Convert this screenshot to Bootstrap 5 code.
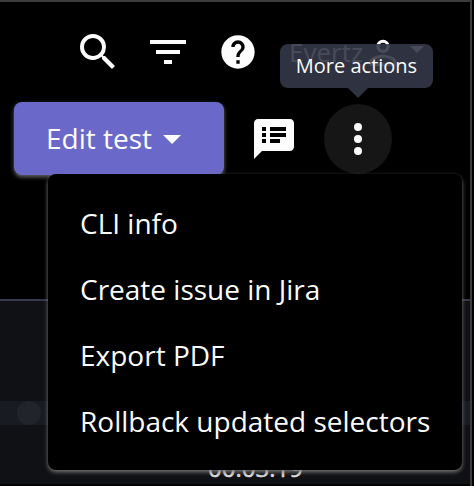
<!DOCTYPE html>
<html lang="en">
<head>
<meta charset="utf-8">
<meta name="viewport" content="width=device-width, initial-scale=1">
<title>Test actions</title>
<link href="https://cdn.jsdelivr.net/npm/bootstrap@5.3.0/dist/css/bootstrap.min.css" rel="stylesheet">
<style>
body{font-family:"Open Sans","Noto Sans",sans-serif;background:#000;color:#fcfcfc;width:474px;height:486px;font-size:28px}
svg{display:block;flex:none;fill:#fcfcfc}
.window-frame{width:472px;height:486px;border-top:2px solid #3c3c3c;border-right:2px solid #3c3c3c}
.app-header{height:299px;border-bottom:2px solid #35374a}
.top-icons{padding:26px 0 0 74px;height:100px}
.icon-filter{margin-left:22px}
.icon-help{margin:4px 0 0 26px}
.user-name{margin:4px 0 0 31px;font-size:26px;line-height:40px;width:74px;color:#fcfcfc}
.icon-user{margin-top:5px}
.caret{width:18px;height:9px;background:#fcfcfc;clip-path:polygon(0 0,100% 0,50% 100%)}
.caret-user{width:14px;height:7px;margin:18px 0 0 7px}
.toolbar-row{padding-left:14px;height:73px}
.btn-edit{--bs-btn-bg:#6a68c8;--bs-btn-color:#fcfcfc;--bs-btn-hover-bg:#7876d2;--bs-btn-hover-color:#fff;width:210px;height:73px;border:0;border-radius:8px;padding:0 0 2px 32px;font-size:28px;box-shadow:0 2px 4px #666}
.btn-edit .caret{margin:4px 0 0 3px}
.icon-notes{margin-left:26px}
.btn-more{width:68px;height:70px;margin:1px 0 0 26px;background:#161616;border:0}
.app-body{height:183px;background:#101115}
.result-row{margin-top:100px;height:24px;background:#191b22;padding-left:17px}
.status-dot{width:24px;height:24px;background:#21242b}
.duration{font-size:24px;line-height:32px;font-weight:500;color:#ddd;-webkit-text-stroke:.5px #ddd;padding:27px 0 0 208px}
.actions-menu{left:48px;top:174px;width:414px;height:296px;padding:16px 0 0;background:#000;border:0;border-radius:8px;box-shadow:0 2px 4px #777;font-size:28px}
.actions-menu .dropdown-item{height:66px;line-height:66px;padding:0 32px;color:#fcfcfc;background:#000}
.tip{left:280px;top:44px;width:153px;height:44px;background:rgba(52,55,71,.9);border-radius:8px;font-size:20px;line-height:44px}
.tip::after{content:"";position:absolute;left:68px;top:44px;width:20px;height:10px;background:#2f3240;clip-path:polygon(0 0,100% 0,50% 100%)}
</style>
<script src="https://cdn.jsdelivr.net/npm/bootstrap@5.3.0/dist/js/bootstrap.bundle.min.js"></script>
</head>
<body class="position-relative overflow-hidden">
<div class="window-frame overflow-hidden">
  <header class="app-header">
    <div class="top-icons d-flex align-items-start">
      <svg width="48" height="48" viewBox="0 0 24 24"><path d="M15.5 14h-.79l-.28-.27A6.47 6.47 0 0 0 16 9.5 6.5 6.5 0 1 0 9.5 16c1.61 0 3.09-.59 4.23-1.57l.27.28v.79l5 4.99L20.49 19l-4.99-5zm-6 0C7.01 14 5 11.99 5 9.5S7.01 5 9.5 5 14 7.01 14 9.5 11.99 14 9.5 14z"/></svg>
      <svg class="icon-filter" width="48" height="48" viewBox="0 0 24 24"><path d="M10 18h4v-2h-4v2zM3 6v2h18V6H3zm3 7h12v-2H6v2z"/></svg>
      <svg class="icon-help" width="40" height="40" viewBox="0 0 24 24"><path d="M12 2C6.48 2 2 6.48 2 12s4.48 10 10 10 10-4.48 10-10S17.52 2 12 2zm1 17h-2v-2h2v2zm2.07-7.75-.9.92C13.45 12.9 13 13.5 13 15h-2v-.5c0-1.1.45-2.1 1.17-2.83l1.24-1.26c.37-.36.59-.86.59-1.41 0-1.1-.9-2-2-2s-2 .9-2 2H8c0-2.21 1.79-4 4-4s4 1.79 4 4c0 .88-.36 1.68-.93 2.25z"/></svg>
      <span class="user-name">Evertz</span>
      <svg class="icon-user" width="40" height="40" viewBox="0 0 24 24"><path d="M12 5.9a2.1 2.1 0 1 1 0 4.2 2.1 2.1 0 0 1 0-4.2m0 9c2.97 0 6.1 1.46 6.1 2.1v1.1H5.9V17c0-.64 3.13-2.1 6.1-2.1M12 4C9.79 4 8 5.79 8 8s1.79 4 4 4 4-1.79 4-4-1.79-4-4-4zm0 9c-2.67 0-8 1.34-8 4v3h16v-3c0-2.66-5.33-4-8-4z"/></svg>
      <span class="caret caret-user"></span>
    </div>
    <div class="toolbar-row d-flex align-items-center">
      <button class="btn btn-edit d-flex align-items-center gap-2" type="button"><span>Edit test</span><span class="caret"></span></button>
      <svg class="icon-notes" width="48" height="48" viewBox="0 0 24 24"><path d="M20 2H4c-1.1 0-1.99.9-1.99 2L2 22l4-4h14c1.1 0 2-.9 2-2V4c0-1.1-.9-2-2-2zM8 14H6v-2h2v2zm0-3H6V9h2v2zm0-3H6V6h2v2zm7 6h-5v-2h5v2zm3-3h-8V9h8v2zm0-3h-8V6h8v2z"/></svg>
      <button class="btn btn-more rounded-circle p-0 d-flex align-items-center justify-content-center" type="button" aria-label="More actions"><svg width="48" height="48" viewBox="0 0 24 24"><circle cx="12" cy="6" r="2"/><circle cx="12" cy="12" r="2"/><circle cx="12" cy="18" r="2"/></svg></button>
    </div>
  </header>
  <main class="app-body overflow-hidden">
    <div class="result-row"><div class="status-dot rounded-circle"></div></div>
    <div class="duration">00:03:19</div>
  </main>
</div>
<div class="dropdown-menu actions-menu show position-absolute">
  <a class="dropdown-item" href="#">CLI info</a>
  <a class="dropdown-item" href="#">Create issue in Jira</a>
  <a class="dropdown-item" href="#">Export PDF</a>
  <a class="dropdown-item" href="#">Rollback updated selectors</a>
</div>
<div class="tip position-absolute text-center" role="tooltip">More actions</div>
</body>
</html>
